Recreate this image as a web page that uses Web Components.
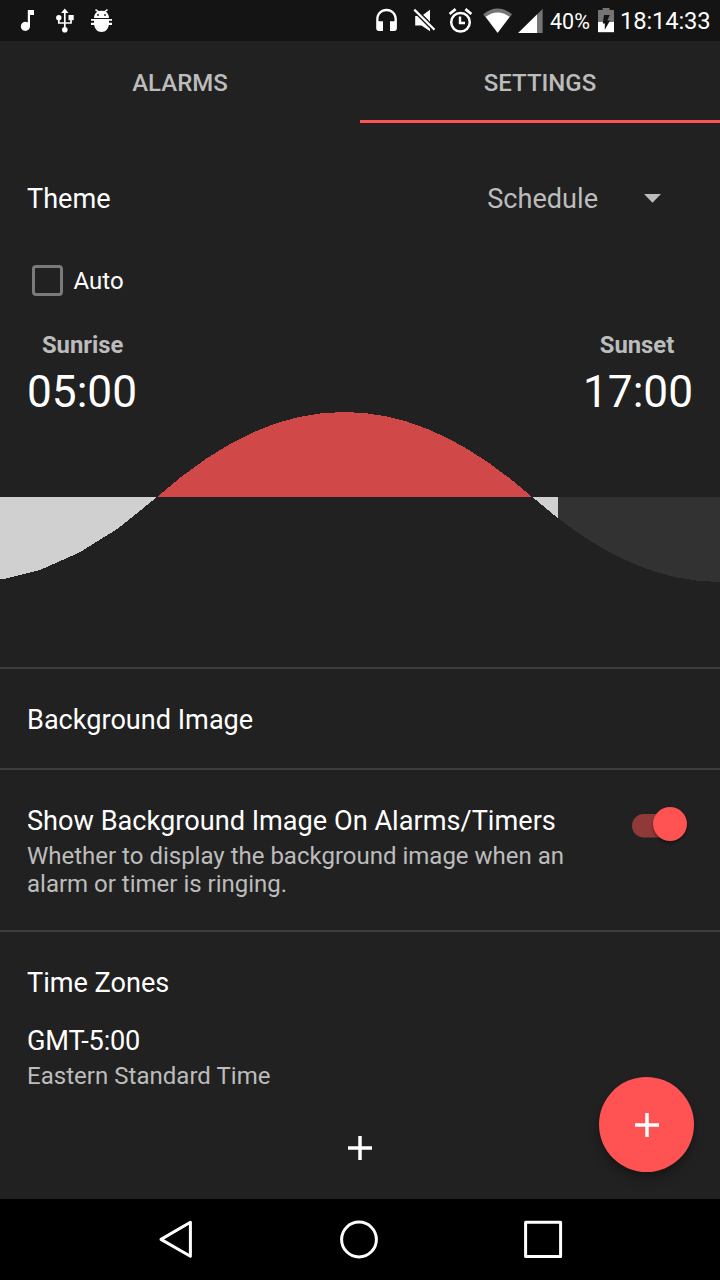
<!DOCTYPE html>
<html lang="en">
<head>
<meta charset="utf-8">
<title>Clock settings</title>
<style>
html,body{margin:0;padding:0;background:#212121}
body{font-family:Roboto,"Noto Sans",sans-serif;color:#fff;width:720px;height:1280px;overflow:hidden}
</style>
</head>
<body>
<clock-app></clock-app>
<script>
function define(name, html) {
  const t = document.createElement('template');
  t.innerHTML = html;
  customElements.define(name, class extends HTMLElement {
    constructor() {
      super();
      this.attachShadow({mode: 'open'}).appendChild(t.content.cloneNode(true));
    }
  });
}

define('status-bar', `
<style>
:host{display:flex;height:41px;background:#141414;flex:none;color:#fff}
svg{display:block;flex:none;height:41px}
.gap{flex:1}
span{line-height:41px;white-space:nowrap;flex:none}
.pct{font-size:21.5px;width:41px;margin-left:6px;padding-top:1px;box-sizing:border-box}
.time{font-size:23.8px;width:91px;margin-right:9px;margin-left:-1px;padding-top:1px;box-sizing:border-box;letter-spacing:-.15px}
</style>
<svg width="120" viewBox="0 0 120 41" fill="#fff">
  <path d="M27.8 10H34V15H30V26.2A4.6 4.6 0 1 1 27.8 22.4Z"/>
  <g fill="none" stroke="#fff" stroke-width="1.7"><path d="M64.8 11V30M58.8 18V23H64.8M71 19V23H64.8"/></g>
  <path d="M64.8 8.4L68.5 13H61.1Z"/><circle cx="58.8" cy="17.7" r="2.7"/><rect x="68.5" y="15" width="5.2" height="5.2"/><circle cx="64.8" cy="29.8" r="2.8"/>
  <path d="M94 18C94 15 95.4 13 97.2 11.8L95 10.2 96 9 98.6 11.1Q101.5 10.2 104.4 11.1L107 9 108 10.2 105.8 11.8C107.6 13 109 15 109 18Z"/>
  <path d="M91 19H112V20.7H109V22.7H112V25H108.8C108.2 29.2 105.5 32 101.5 32S94.8 29.2 94.2 25H91V22.7H94V20.7H91Z"/>
  <g fill="#141414"><circle cx="98" cy="15" r=".9"/><circle cx="105" cy="15" r=".9"/></g>
</svg>
<div class="gap"></div>
<svg width="179" viewBox="365 0 179 41" fill="#fff">
  <path d="M386.5 8.8C380.8 8.8 376.2 13.4 376.2 19V28Q376.2 31 379 31H383V21.2H378.5V19C378.5 14.4 382 11.2 386.5 11.2S394.5 14.4 394.5 19V21.2H390V31H394Q396.9 31 396.9 28V19C396.9 13.4 392.2 8.8 386.5 8.8Z"/>
  <path d="M415.2 16H421.5L430 9.8V31.2L421.5 25.5H415.2Z"/>
  <path d="M414.3 9.6L434.5 29.8" stroke="#141414" stroke-width="5"/>
  <path d="M414.3 9.6L434.5 29.8" stroke="#fff" stroke-width="2.2"/>
  <circle cx="460.5" cy="22.2" r="9.3" fill="none" stroke="#fff" stroke-width="2.5"/>
  <path d="M460 16.5V23H465" fill="none" stroke="#fff" stroke-width="2.4"/>
  <path d="M449.6 14L455.6 9.2M471.4 14L465.4 9.2" stroke="#fff" stroke-width="2.8"/>
  <path d="M483.2 14.2Q497.6 2.6 512 14.2L497.6 33Z" fill="#757575"/>
  <path d="M485.6 16.7Q497.6 8.2 509.6 16.7L497.6 32.8Z"/>
  <path d="M518.2 33L542.6 9V33Z" fill="#757575"/>
  <path d="M518.2 33L537 14.5V33Z"/>
</svg>
<span class="pct">40%</span>
<svg width="30" viewBox="591 0 30 41"><path d="M598 10H602.7V8H609.5V10H614V22H598Z" fill="#757575"/><path d="M598 22H614V32.2H598Z" fill="#fff"/><path d="M604 15H609.8L607.3 20.5H610L604.8 29.8V23.6H602.8Z" fill="#141414"/></svg>
<span class="time">18:14:33</span>`);

define('tab-item', `
<style>
:host{display:flex;flex:1;box-sizing:border-box;justify-content:center;padding-top:28px;font-size:24px;font-weight:500;line-height:28px;color:#bcbcbc;border-bottom:3px solid transparent}
:host([selected]){border-color:#ff5252}
</style><slot></slot>`);

define('tab-strip', `<style>:host{display:flex;height:82px;flex:none}</style><slot></slot>`);

define('list-section', `
<style>:host{display:flex;flex-direction:column;box-sizing:border-box;border-top:2px solid #3d3d3d;padding:35px 27px 0}</style><slot></slot>`);

define('item-text', `
<style>
:host{display:block}
.t{font-size:27.15px;line-height:32px;white-space:nowrap}
.d{font-size:24px;line-height:28px;color:#bcbcbc;margin-top:5px;letter-spacing:0}
</style><div class="t"><slot></slot></div><div class="d"><slot name="detail"></slot></div>`);

define('toggle-switch', `
<style>:host{display:block;width:62px;height:44px}svg{display:block;overflow:visible}circle{filter:drop-shadow(0 2px 1.5px rgba(0,0,0,.4))}</style>
<svg width="62" height="44" viewBox="629 802 62 44"><rect x="632" y="814" width="50" height="23.4" rx="11.7" fill="#903939"/><circle cx="670" cy="824" r="17" fill="#ff5252"/></svg>`);

define('plus-icon', `
<style>:host{display:block;width:24px;height:24px}svg{display:block}</style>
<svg width="24" height="24" viewBox="0 0 24 24"><path d="M0 12H24M12 0V24" stroke="#fff" stroke-width="3.5"/></svg>`);

define('time-field', `
<style>
:host{display:flex;flex-direction:column;align-items:center;width:110px}
.l{font-size:23.8px;font-weight:700;line-height:28px;color:#bcbcbc;position:relative;left:var(--shift,0)}
.v{font-size:44.2px;line-height:52px;margin-top:7px;white-space:nowrap}
</style><div class="l"><slot name="label"></slot></div><div class="v"><slot></slot></div>`);

define('check-box', `
<style>
:host{display:flex;align-items:center;height:32px;font-size:24px;line-height:28px}
i{box-sizing:border-box;width:31px;height:31px;border:3.4px solid #7a7a7a;border-radius:4px;margin:-2px 11px 0 4.5px}
</style><i></i><slot></slot>`);

define('drop-down', `
<style>
:host{display:flex;align-items:center;font-size:27.1px;line-height:32px;color:#bcbcbc}
svg{margin:-1px 32px 0 46px}
</style><slot></slot><svg width="17" height="9" viewBox="0 0 17 9"><path d="M0 0H17L8.5 8.7Z" fill="#bcbcbc"/></svg>`);

define('sun-chart', `
<style>:host{display:block;height:174px}svg{display:block}</style>
<svg width="720" height="174" viewBox="0 410 720 174" shape-rendering="crispEdges">
  <path fill="#323232" d="M558 497H720V582C656 582 595 552.5 532.5 497Z"/>
  <path fill="#d0d0d0" d="M0 497V579H4L40 570 79 552.7 118 528.5 157 497ZM532.5 497H558V518.3Z"/>
  <path fill="#d04848" d="M157 497C220 441.5 280 412 344 412S469 441.5 532 497Z"/>
</svg>`);

define('theme-panel', `
<style>
:host{display:flex;flex-direction:column;height:544px;box-sizing:border-box;padding-top:60px}
.row{display:flex;justify-content:space-between;padding:0 27px}
.title{font-size:27.1px;line-height:32px}
.auto{margin-top:50px}
.times{margin-top:34px}
sun-chart{margin-top:-8px}
</style>
<div class="row"><div class="title">Theme</div><drop-down>Schedule</drop-down></div>
<div class="row auto"><check-box>Auto</check-box></div>
<div class="row times"><time-field style="--shift:.7px"><span slot="label">Sunrise</span>05:00</time-field><time-field style="--shift:-1px"><span slot="label">Sunset</span>17:00</time-field></div>
<sun-chart></sun-chart>`);

define('action-button', `
<style>:host{display:flex;align-items:center;justify-content:center;width:95px;height:95px;border-radius:50%;background:#ff5252;box-shadow:0 8px 12px rgba(0,0,0,.2),0 3px 4px rgba(0,0,0,.15)}</style><slot></slot>`);

define('nav-bar', `
<style>:host{display:block;height:81px;background:#000;flex:none}svg{display:block}</style>
<svg width="720" height="81" viewBox="0 1199 720 81" fill="none" stroke="#fff" stroke-width="3">
  <path d="M190.4 1222.3V1256.3L161 1239.4Z" stroke-linejoin="round"/><circle cx="359" cy="1239.5" r="17.4"/><rect x="525.6" y="1222.2" width="35" height="34.4" stroke-linejoin="round"/>
</svg>`);

define('clock-app', `
<style>
:host{display:flex;flex-direction:column;position:relative;width:720px;height:1280px;background:#212121}
main{flex:1;min-height:0;display:flex;flex-direction:column}
.image{height:101px}
.show{height:162px}
.zones{flex:1}
.line{display:flex;justify-content:space-between}
.line item-text{width:570px}
toggle-switch{margin:-3px 2px 0 0}
.heading{font-size:27.1px;line-height:32px}
.zone{height:84px;margin-top:26px;letter-spacing:-.2px}
.zones plus-icon{margin:27px auto 0}
action-button{position:absolute;left:599px;top:1077px}
</style>
<status-bar></status-bar>
<tab-strip><tab-item>ALARMS</tab-item><tab-item selected>SETTINGS</tab-item></tab-strip>
<main>
  <theme-panel></theme-panel>
  <list-section class="image"><div class="heading">Background Image</div></list-section>
  <list-section class="show"><div class="line"><item-text>Show Background Image On Alarms/Timers<span slot="detail">Whether to display the background image when an alarm or timer is ringing.</span></item-text><toggle-switch></toggle-switch></div></list-section>
  <list-section class="zones"><div class="heading">Time Zones</div><item-text class="zone">GMT-5:00<span slot="detail" style="letter-spacing:.03px">Eastern Standard Time</span></item-text><plus-icon></plus-icon></list-section>
</main>
<nav-bar></nav-bar>
<action-button><plus-icon></plus-icon></action-button>`);
</script>
</body>
</html>
